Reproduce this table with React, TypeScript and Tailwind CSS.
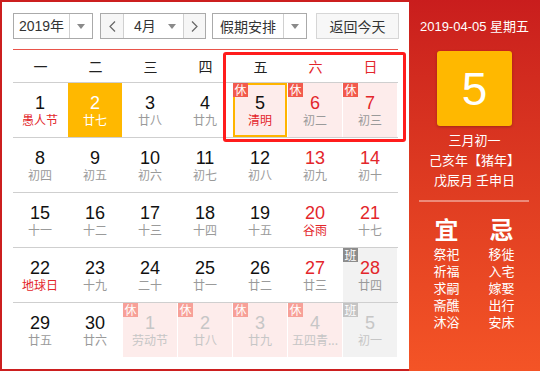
import React from "react";

type Cell = {
  n: number;
  l: string;
  red?: boolean;
  lred?: boolean;
  badge?: "休" | "班";
  faded?: boolean;
  today?: boolean;
  sel?: boolean;
};

const rows: Cell[][] = [
  [
    { n: 1, l: "愚人节", lred: true },
    { n: 2, l: "廿七", today: true },
    { n: 3, l: "廿八" },
    { n: 4, l: "廿九" },
    { n: 5, l: "清明", lred: true, badge: "休", sel: true },
    { n: 6, l: "初二", red: true, badge: "休" },
    { n: 7, l: "初三", red: true, badge: "休" },
  ],
  [
    { n: 8, l: "初四" },
    { n: 9, l: "初五" },
    { n: 10, l: "初六" },
    { n: 11, l: "初七" },
    { n: 12, l: "初八" },
    { n: 13, l: "初九", red: true },
    { n: 14, l: "初十", red: true },
  ],
  [
    { n: 15, l: "十一" },
    { n: 16, l: "十二" },
    { n: 17, l: "十三" },
    { n: 18, l: "十四" },
    { n: 19, l: "十五" },
    { n: 20, l: "谷雨", red: true, lred: true },
    { n: 21, l: "十七", red: true },
  ],
  [
    { n: 22, l: "地球日", lred: true },
    { n: 23, l: "十九" },
    { n: 24, l: "二十" },
    { n: 25, l: "廿一" },
    { n: 26, l: "廿二" },
    { n: 27, l: "廿三", red: true },
    { n: 28, l: "廿四", red: true, badge: "班" },
  ],
  [
    { n: 29, l: "廿五" },
    { n: 30, l: "廿六" },
    { n: 1, l: "劳动节", badge: "休", faded: true },
    { n: 2, l: "廿八", badge: "休", faded: true },
    { n: 3, l: "廿九", badge: "休", faded: true },
    { n: 4, l: "五四青...", badge: "休", faded: true },
    { n: 5, l: "初一", badge: "班", faded: true },
  ],
];

const font = { fontFamily: '"Liberation Sans", Arial, "Noto Sans CJK SC", sans-serif' };

function Caret() {
  return (
    <svg width="8" height="5" viewBox="0 0 8 5">
      <path d="M0 0 L8 0 L4 5 Z" fill="#8a8a8a" />
    </svg>
  );
}

function Chevron({ left }: { left?: boolean }) {
  return (
    <svg width="7" height="11" viewBox="0 0 7 11">
      <path
        d={left ? "M6 0.5 L1 5.5 L6 10.5" : "M1 0.5 L6 5.5 L1 10.5"}
        fill="none"
        stroke="#666"
        strokeWidth="1.2"
      />
    </svg>
  );
}

function DayCell({ c }: { c: Cell }) {
  let bg = "";
  if (c.today) bg = "bg-[#ffb800]";
  else if (c.badge === "休") bg = "bg-[#fdeceb]";
  else if (c.badge === "班") bg = "bg-[#f2f2f2]";

  let numColor = "text-[#111]";
  if (c.today) numColor = "text-white";
  else if (c.faded) numColor = "text-[#c6c6c6]";
  else if (c.red) numColor = "text-[#e3262b]";

  let lunColor = "text-[#9a9a9a]";
  if (c.today) lunColor = "text-white";
  else if (c.faded) lunColor = "text-[#c6c6c6]";
  else if (c.lred) lunColor = "text-[#e3262b]";

  let badgeBg = "";
  if (c.badge === "休") badgeBg = c.faded ? "bg-[#f7a098]" : "bg-[#f25a4d]";
  if (c.badge === "班") badgeBg = c.faded ? "bg-[#c4c4c4]" : "bg-[#8c8c8c]";

  return (
    <div className="w-[55px] h-[54px]">
      <div
        className={`relative w-[54px] h-[54px] flex flex-col items-center ${bg} ${
          c.sel ? "border-2 border-[#ffb400]" : ""
        }`}
      >
        {c.badge && (
          <div
            className={`absolute ${c.sel ? "-left-[2px] -top-[2px]" : "left-0 top-0"} w-[15px] h-[14px] ${badgeBg} text-white text-[12px] leading-[14px] text-center`}
            style={{ fontFamily: '"Noto Sans CJK SC", sans-serif' }}
          >
            {c.badge}
          </div>
        )}
        <div className={`${c.sel ? "pt-[8px]" : "pt-[10px]"} text-[18px] leading-[20px] ${numColor}`}>{c.n}</div>
        <div
          className={`text-[12px] leading-[14px] whitespace-nowrap ${lunColor}`}
          style={{ fontFamily: '"Noto Sans CJK SC", sans-serif' }}
        >
          {c.l}
        </div>
      </div>
    </div>
  );
}

export default function App() {
  const weekdays = ["一", "二", "三", "四", "五", "六", "日"];
  const yi = ["祭祀", "祈福", "求嗣", "斋醮", "沐浴"];
  const ji = ["移徙", "入宅", "嫁娶", "出行", "安床"];
  return (
    <div className="w-[540px] h-[371px] flex bg-white" style={font}>
      <div className="relative w-[409px] h-[371px] border-l-2 border-t-2 border-b-2 border-[#cc1f1f] pl-[11px] pt-[11px]">
        {/* controls */}
        <div className="flex h-[26px] text-[14px] text-[#333]">
          <div className="w-[80px] h-[26px] flex border border-[#aaa]">
            <div className="w-[55px] flex items-center justify-center" style={{ fontFamily: '"Liberation Sans", "Noto Sans CJK SC", sans-serif' }}>2019年</div>
            <div className="flex-1 border-l border-[#d0d0d0] flex items-center justify-center">
              <Caret />
            </div>
          </div>
          <div className="ml-[7px] w-[106px] h-[26px] flex border border-[#aaa]">
            <div className="w-[22px] bg-[#f6f6f6] flex items-center justify-center">
              <Chevron left />
            </div>
            <div className="w-[60px] border-l border-[#d0d0d0] flex items-center">
              <span className="ml-[10px] w-[34px]">4月</span>
              <Caret />
            </div>
            <div className="flex-1 border-l border-[#d0d0d0] bg-[#f6f6f6] flex items-center justify-center">
              <Chevron />
            </div>
          </div>
          <div className="ml-[6px] w-[95px] h-[26px] flex border border-[#aaa]">
            <div className="w-[70px] flex items-center justify-center" style={{ fontFamily: '"Noto Sans CJK SC", sans-serif' }}>假期安排</div>
            <div className="flex-1 border-l border-[#d0d0d0] flex items-center justify-center">
              <Caret />
            </div>
          </div>
          <div
            className="ml-[9px] w-[83px] h-[26px] border border-[#d6d6d6] bg-[#f7f7f7] flex items-center justify-center"
            style={{ fontFamily: '"Noto Sans CJK SC", sans-serif' }}
          >
            返回今天
          </div>
        </div>
        <div className="mt-[10px] w-[385px] h-px bg-[#e9534a]" />
        {/* weekday header */}
        <div
          className="w-[385px] h-[33px] flex border-b border-[#cfcfcf] text-[14px]"
          style={{ fontFamily: '"Noto Sans CJK SC", sans-serif' }}
        >
          {weekdays.map((w, i) => (
            <div
              key={w}
              className={`w-[55px] flex items-center justify-center ${i >= 5 ? "text-[#e3262b]" : "text-[#222]"}`}
            >
              {w}
            </div>
          ))}
        </div>
        {/* days */}
        <div className="w-[385px]">
          {rows.map((r, ri) => (
            <div key={ri} className={`flex ${ri < 4 ? "border-b border-[#cfcfcf]" : ""}`}>
              {r.map((c, ci) => (
                <DayCell key={ci} c={c} />
              ))}
            </div>
          ))}
        </div>
        {/* highlight overlay */}
        <div className="absolute left-[221px] top-[50px] w-[183px] h-[90px] border-[3px] border-[#ff1c1c] rounded-[3px] pointer-events-none" />
      </div>
      {/* right panel */}
      <div
        className="w-[131px] h-[371px] bg-linear-to-b from-[#c91d1d] to-[#f45426] flex flex-col items-center text-white"
        style={{ fontFamily: '"Liberation Sans", "Noto Sans CJK SC", sans-serif' }}
      >
        <div className="pt-[18px] text-[13px] leading-[18px] whitespace-nowrap">2019-04-05 星期五</div>
        <div className="mt-[15px] w-[75px] h-[75px] rounded-[3px] bg-[#ffb800] shadow-[0_1px_3px_rgba(0,0,0,0.25)] flex items-center justify-center text-[46px] leading-none">
          5
        </div>
        <div className="mt-[4px] text-[13px] leading-[20px] text-center" style={{ fontFamily: '"Noto Sans CJK SC", sans-serif' }}>
          <div>三月初一</div>
          <div>己亥年【猪年】</div>
          <div>戊辰月 壬申日</div>
        </div>
        <div className="mt-[10px] self-start ml-[10px] w-[110px] h-[2px] bg-white/40" />
        <div className="self-start ml-[10px] grid grid-cols-[55px_55px] mt-[12px]" style={{ fontFamily: '"Noto Sans CJK SC", sans-serif' }}>
          <div className="text-center text-[24px] leading-[30px] font-bold">宜</div>
          <div className="text-center text-[24px] leading-[30px] font-bold">忌</div>
          <div className="mt-[1px] text-center text-[13px] leading-[17px]">
            {yi.map((t) => (
              <div key={t}>{t}</div>
            ))}
          </div>
          <div className="mt-[1px] text-center text-[13px] leading-[17px]">
            {ji.map((t) => (
              <div key={t}>{t}</div>
            ))}
          </div>
        </div>
      </div>
    </div>
  );
}
